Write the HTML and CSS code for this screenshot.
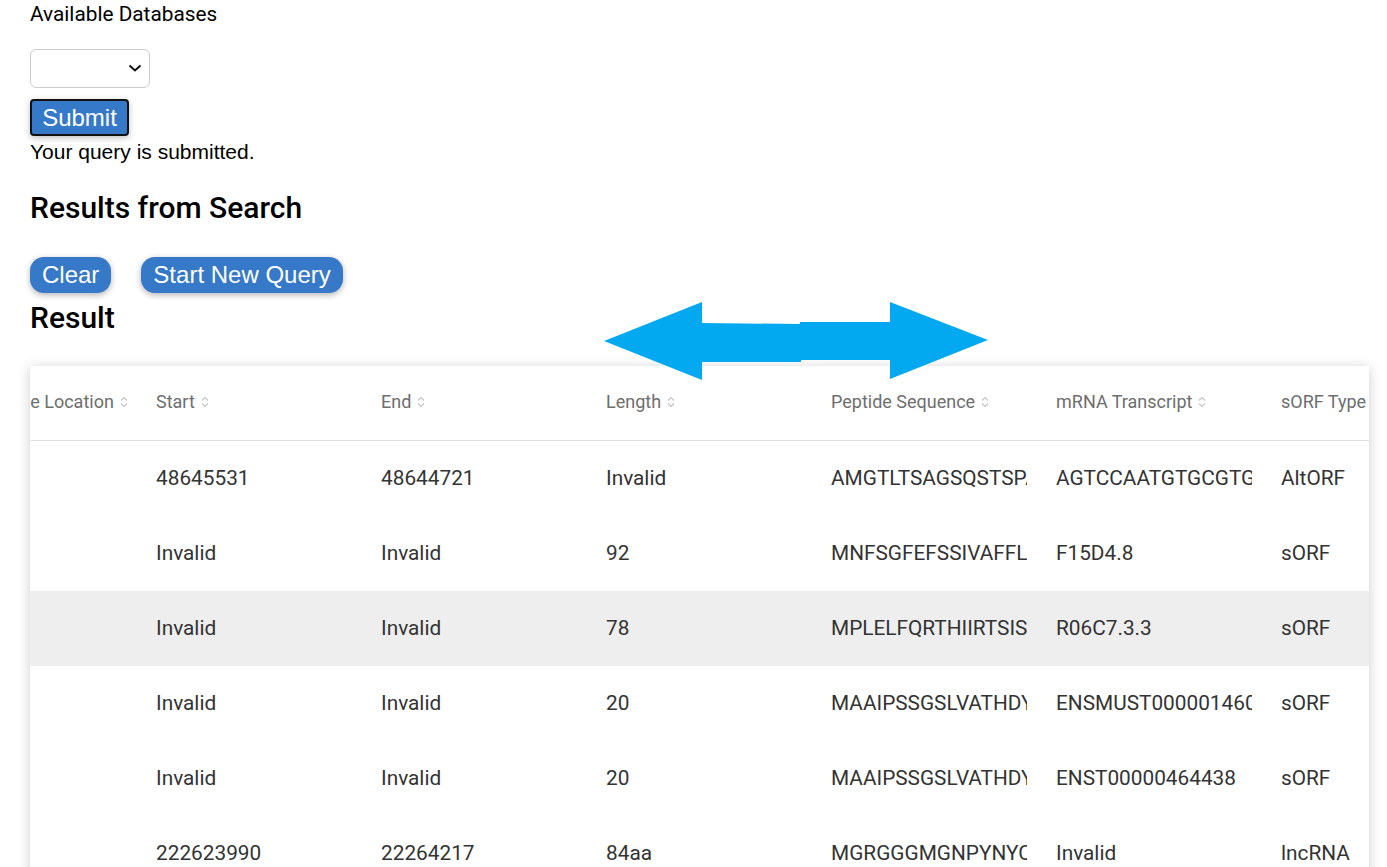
FILE: index.html
```html
<!DOCTYPE html>
<html lang="en">
<head>
<meta charset="utf-8">
<title>Results</title>
<link rel="stylesheet" href="styles.css">
</head>
<body>
<div class="page">
  <div class="label">Available Databases</div>
  <div class="select-wrap">
    <select class="db-select"><option></option></select>
    <svg class="chev" viewBox="0 0 14 8" aria-hidden="true"><path d="M1.5 1.5 L7 6.5 L12.5 1.5"/></svg>
  </div>
  <div class="submit-row"><button class="submit">Submit</button></div>
  <p class="status">Your query is submitted.</p>
  <h2 class="heading search-heading">Results from Search</h2>
  <div class="actions">
    <button class="pill">Clear</button>
    <button class="pill">Start New Query</button>
  </div>
  <h2 class="heading result-heading">Result</h2>
  <div class="card">
    <table class="grid">
      <colgroup>
        <col class="c"><col class="c"><col class="c"><col class="c"><col class="c"><col class="c"><col class="c">
      </colgroup>
      <thead>
        <tr>
          <th><span class="th">Chromosome Location<svg class="sort" viewBox="0 0 10 14"><path d="M2 5.5 L5 2.5 L8 5.5 M2 8.5 L5 11.5 L8 8.5"/></svg></span></th>
          <th><span class="th">Start<svg class="sort" viewBox="0 0 10 14"><path d="M2 5.5 L5 2.5 L8 5.5 M2 8.5 L5 11.5 L8 8.5"/></svg></span></th>
          <th><span class="th">End<svg class="sort" viewBox="0 0 10 14"><path d="M2 5.5 L5 2.5 L8 5.5 M2 8.5 L5 11.5 L8 8.5"/></svg></span></th>
          <th><span class="th">Length<svg class="sort" viewBox="0 0 10 14"><path d="M2 5.5 L5 2.5 L8 5.5 M2 8.5 L5 11.5 L8 8.5"/></svg></span></th>
          <th><span class="th">Peptide Sequence<svg class="sort" viewBox="0 0 10 14"><path d="M2 5.5 L5 2.5 L8 5.5 M2 8.5 L5 11.5 L8 8.5"/></svg></span></th>
          <th><span class="th">mRNA Transcript<svg class="sort" viewBox="0 0 10 14"><path d="M2 5.5 L5 2.5 L8 5.5 M2 8.5 L5 11.5 L8 8.5"/></svg></span></th>
          <th><span class="th">sORF Type<svg class="sort" viewBox="0 0 10 14"><path d="M2 5.5 L5 2.5 L8 5.5 M2 8.5 L5 11.5 L8 8.5"/></svg></span></th>
        </tr>
      </thead>
      <tbody>
        <tr>
          <td><div class="cell"></div></td>
          <td><div class="cell">48645531</div></td>
          <td><div class="cell">48644721</div></td>
          <td><div class="cell">Invalid</div></td>
          <td><div class="cell">AMGTLTSAGSQSTSPAQ</div></td>
          <td><div class="cell">AGTCCAATGTGCGTGCA</div></td>
          <td><div class="cell">AltORF</div></td>
        </tr>
        <tr>
          <td><div class="cell"></div></td>
          <td><div class="cell">Invalid</div></td>
          <td><div class="cell">Invalid</div></td>
          <td><div class="cell">92</div></td>
          <td><div class="cell">MNFSGFEFSSIVAFFLLL</div></td>
          <td><div class="cell">F15D4.8</div></td>
          <td><div class="cell">sORF</div></td>
        </tr>
        <tr class="hover">
          <td><div class="cell"></div></td>
          <td><div class="cell">Invalid</div></td>
          <td><div class="cell">Invalid</div></td>
          <td><div class="cell">78</div></td>
          <td><div class="cell">MPLELFQRTHIIRTSISR</div></td>
          <td><div class="cell">R06C7.3.3</div></td>
          <td><div class="cell">sORF</div></td>
        </tr>
        <tr>
          <td><div class="cell"></div></td>
          <td><div class="cell">Invalid</div></td>
          <td><div class="cell">Invalid</div></td>
          <td><div class="cell">20</div></td>
          <td><div class="cell">MAAIPSSGSLVATHDYY</div></td>
          <td><div class="cell">ENSMUST00000146037</div></td>
          <td><div class="cell">sORF</div></td>
        </tr>
        <tr>
          <td><div class="cell"></div></td>
          <td><div class="cell">Invalid</div></td>
          <td><div class="cell">Invalid</div></td>
          <td><div class="cell">20</div></td>
          <td><div class="cell">MAAIPSSGSLVATHDYY</div></td>
          <td><div class="cell">ENST00000464438</div></td>
          <td><div class="cell">sORF</div></td>
        </tr>
        <tr>
          <td><div class="cell"></div></td>
          <td><div class="cell">222623990</div></td>
          <td><div class="cell">22264217</div></td>
          <td><div class="cell">84aa</div></td>
          <td><div class="cell">MGRGGGMGNPYNYCQ</div></td>
          <td><div class="cell">Invalid</div></td>
          <td><div class="cell">lncRNA</div></td>
        </tr>
      </tbody>
    </table>
  </div>
  <svg class="arrow" viewBox="0 0 384 80" aria-hidden="true">
    <polygon points="0,39 98,0 98,21 197,22 197,60 98,60 98,78"/>
    <polygon points="196,20 286,20 286,0 384,38 286,77 286,58 196,58"/>
  </svg>
</div>
</body>
</html>
```
FILE: styles.css
```css
html, body {
  margin: 0;
  padding: 0;
  background: #ffffff;
}

body {
  font-family: Roboto, "Noto Sans", sans-serif;
  color: #000;
}

.page {
  position: relative;
  padding: 0 18px 40px 30px;
}

.label {
  font-size: 20.8px;
  line-height: 28px;
}

.select-wrap {
  position: relative;
  width: 120px;
  margin-top: 21px;
}

.db-select {
  display: block;
  width: 120px;
  height: 39px;
  border: 1px solid #cccccc;
  border-radius: 6px;
  background: #ffffff;
  font-size: 16px;
  appearance: none;
  -webkit-appearance: none;
}

.chev {
  position: absolute;
  left: 98px;
  top: 15px;
  width: 14px;
  height: 8px;
  fill: none;
  stroke: #111111;
  stroke-width: 2;
  pointer-events: none;
}

.submit-row {
  margin-top: 11px;
}

.submit {
  display: block;
  height: 37px;
  width: 99px;
  padding: 0;
  border: 2px solid #111111;
  border-radius: 4px;
  background: #3679c9;
  color: #ffffff;
  font-family: "Liberation Sans", Arial, sans-serif;
  font-size: 24px;
  line-height: 33px;
  box-shadow: 0 2px 6px rgba(0, 0, 0, 0.25);
}

.status {
  margin: 4px 0 0 0;
  font-family: "Liberation Sans", Arial, sans-serif;
  font-size: 21px;
  line-height: 24px;
}

.heading {
  margin: 0;
  font-family: Roboto, sans-serif;
  font-weight: 500;
  font-size: 30px;
  line-height: 36px;
}

.search-heading {
  margin-top: 26px;
}

.actions {
  display: flex;
  gap: 30px;
  margin-top: 31px;
}

.pill {
  height: 36px;
  padding: 0 12px;
  border: none;
  border-radius: 14px;
  background: #3679c9;
  color: #ffffff;
  font-family: "Liberation Sans", Arial, sans-serif;
  font-size: 24px;
  line-height: 36px;
  box-shadow: 0 2px 6px rgba(0, 0, 0, 0.3);
}

.result-heading {
  margin-top: 7px;
}

.card {
  margin-top: 30px;
  width: 1339px;
  overflow: hidden;
  background: #ffffff;
  box-shadow: 0 2px 12px rgba(0, 0, 0, 0.2);
}

.grid {
  table-layout: fixed;
  border-collapse: collapse;
  margin-left: -115px;
  width: 1575px;
}

.grid .c {
  width: 225px;
}

.grid th {
  height: 74px;
  padding: 0 0 2px 16px;
  text-align: left;
  font-weight: 400;
  font-size: 18px;
  color: #6e6e6e;
  border-bottom: 1px solid #e0e0e0;
  white-space: nowrap;
  overflow: hidden;
  box-sizing: border-box;
}

.th {
  display: inline-flex;
  align-items: center;
  gap: 5px;
}

.sort {
  width: 10px;
  height: 14px;
  fill: none;
  stroke: #c4c4c4;
  stroke-width: 1.2;
}

.grid td {
  height: 75px;
  padding: 0 13px 0 16px;
  font-size: 20.8px;
  color: #333333;
  vertical-align: middle;
}

.cell {
  overflow: hidden;
  white-space: nowrap;
}

.grid tr.hover td {
  background: #eeeeee;
}

.arrow {
  position: absolute;
  left: 604px;
  top: 302px;
  width: 384px;
  height: 80px;
  fill: #02a9f1;
}
```
